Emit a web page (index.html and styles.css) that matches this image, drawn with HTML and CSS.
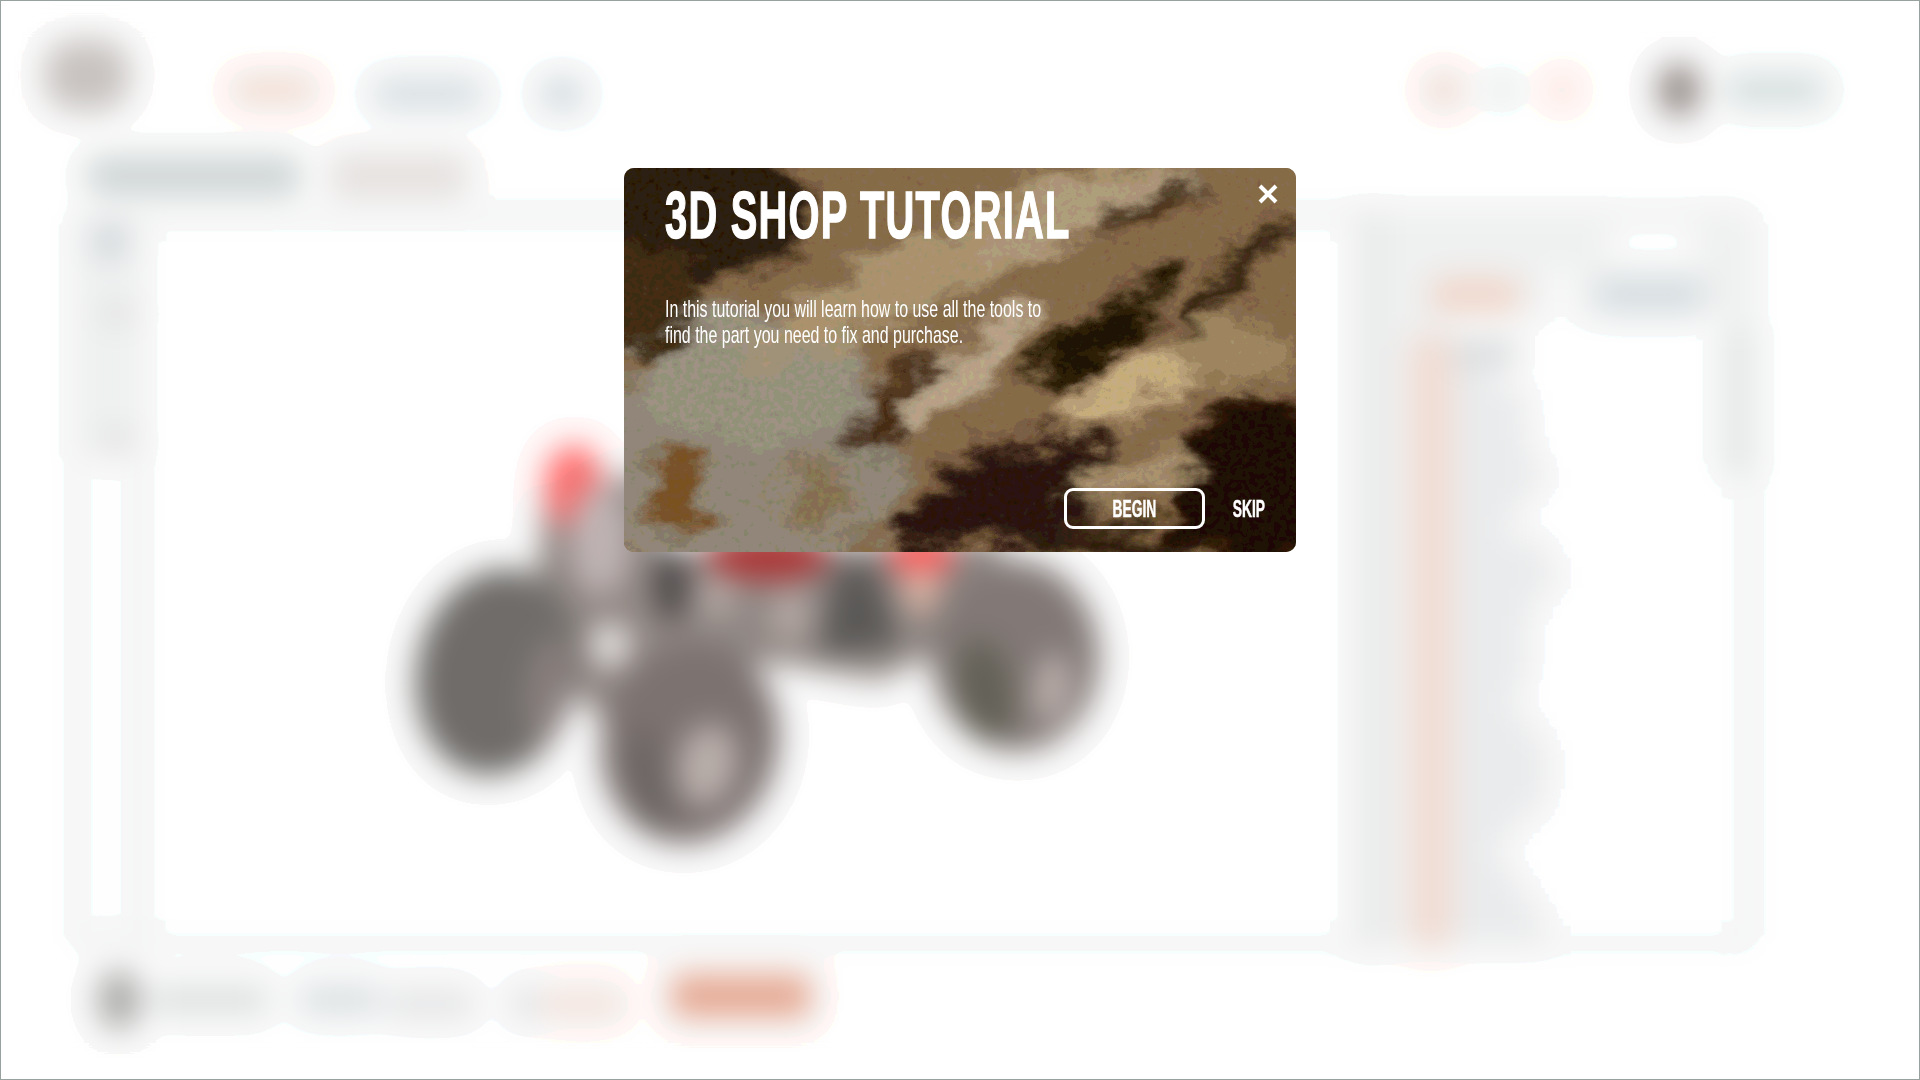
FILE: index.html
```html
<!DOCTYPE html>
<html lang="en">
<head>
    <meta charset="UTF-8">
    <meta name="viewport" content="width=device-width, initial-scale=1.0">
    <title>3D Shop Tutorial</title>
    <link rel="stylesheet" href="styles.css">
</head>
<body>

<!-- Filter used for the page behind the popup -->
<svg class="filters" width="0" height="0">
    <defs>
        <filter id="page-blur" x="0" y="0" width="100%" height="100%" color-interpolation-filters="sRGB">
            <feGaussianBlur stdDeviation="15" result="blur"/>
            <feComponentTransfer in="blur">
                <feFuncR type="gamma" exponent="138"/>
                <feFuncG type="gamma" exponent="138"/>
                <feFuncB type="gamma" exponent="138"/>
            </feComponentTransfer>
            <feComponentTransfer result="mask">
                <feFuncR type="discrete" tableValues="0 1"/>
                <feFuncG type="discrete" tableValues="0 1"/>
                <feFuncB type="discrete" tableValues="0 1"/>
            </feComponentTransfer>
            <feComposite in="blur" in2="mask" operator="arithmetic" k1="0.025" k2="0.975" k3="0" k4="0"/>
        </filter>
    </defs>
</svg>

<!-- Shop page, blurred behind the tutorial -->
<div class="app">
    <div class="top-bar">
        <div class="logo"></div>
        <div class="nav-item nav-peach"></div>
        <div class="nav-item nav-blue"></div>
        <div class="nav-item nav-small"></div>
        <div class="top-right">
            <div class="dot dot-peach"></div>
            <div class="dot dot-teal"></div>
            <div class="dot dot-orange"></div>
            <div class="avatar"></div>
            <div class="user-name"></div>
        </div>
    </div>

    <div class="title-row">
        <div class="page-title"></div>
        <div class="page-tag"></div>
    </div>

    <div class="workspace">
        <div class="sidebar">
            <div class="tool-icon"></div>
            <div class="tool-light"></div>
            <div class="tool-light tool-second"></div>
            <div class="tool-slot"></div>
        </div>

        <div class="viewport">
            <svg class="car" width="1212" height="717" viewBox="0 0 1212 717">
                <g transform="translate(-143 -220)">
                    <!-- body -->
                    <polygon points="545,500 650,470 660,552 1000,540 1000,620 880,680 790,665 700,660 610,730 530,640" fill="#958c88"/>
                    <ellipse cx="574" cy="487" rx="30" ry="42" fill="#ff7272"/>
                    <ellipse cx="600" cy="540" rx="30" ry="55" fill="#c4b8b8"/>
                    <ellipse cx="768" cy="555" rx="62" ry="26" fill="#b03c3c"/>
                    <ellipse cx="921" cy="554" rx="32" ry="26" fill="#ff6060"/>
                    <ellipse cx="921" cy="590" rx="18" ry="24" fill="#e0b8a8"/>
                    <ellipse cx="671" cy="585" rx="18" ry="38" fill="#504b4b"/>
                    <polygon points="835,565 875,565 900,645 820,655" fill="#5c5a58"/>
                    <ellipse cx="717" cy="595" rx="18" ry="22" fill="#b8aca8"/>
                    <ellipse cx="790" cy="615" rx="18" ry="26" fill="#bbaeaa"/>
                    <ellipse cx="610" cy="645" rx="20" ry="22" fill="#eeeaea"/>
                    <!-- wheels -->
                    <ellipse cx="497" cy="672" rx="80" ry="104" fill="#726f6c" transform="rotate(12 497 672)"/>
                    <ellipse cx="548" cy="690" rx="22" ry="55" fill="#8c8280" transform="rotate(8 548 690)"/>
                    <ellipse cx="690" cy="742" rx="88" ry="102" fill="#7f7573" transform="rotate(14 690 742)"/>
                    <ellipse cx="650" cy="780" rx="22" ry="50" fill="#6f6967" transform="rotate(-14 650 780)"/>
                    <ellipse cx="707" cy="765" rx="30" ry="42" fill="#bdb2ae" transform="rotate(14 707 765)"/>
                    <ellipse cx="1015" cy="655" rx="84" ry="96" fill="#857c79" transform="rotate(-6 1015 655)"/>
                    <ellipse cx="985" cy="690" rx="28" ry="52" fill="#666459" transform="rotate(-10 985 690)"/>
                    <ellipse cx="1052" cy="688" rx="18" ry="36" fill="#c0b4b0" transform="rotate(10 1052 688)"/>
                </g>
            </svg>
        </div>

        <div class="side">
            <div class="rail"></div>
            <div class="side-main">
                <div class="tabs">
                    <div class="tab tab-peach"></div>
                    <div class="tab-gap"></div>
                    <div class="tab tab-blue"></div>
                    <div class="tab-spot"></div>
                </div>
                <div class="side-body">
                    <div class="strip"></div>
                    <div class="list">
                        <div class="parts">
                            <div class="part part-head" style="width: 62px"></div>
                            <div class="part" style="width: 46px"></div>
                            <div class="part" style="width: 74px"></div>
                            <div class="part" style="width: 72px"></div>
                            <div class="part" style="width: 78px"></div>
                            <div class="part" style="width: 92px"></div>
                            <div class="part" style="width: 70px"></div>
                            <div class="part" style="width: 56px"></div>
                            <div class="part" style="width: 92px"></div>
                            <div class="part" style="width: 104px"></div>
                            <div class="part" style="width: 82px"></div>
                            <div class="part" style="width: 74px"></div>
                            <div class="part" style="width: 74px"></div>
                            <div class="part" style="width: 72px"></div>
                            <div class="part" style="width: 60px"></div>
                            <div class="part" style="width: 78px"></div>
                            <div class="part" style="width: 94px"></div>
                            <div class="part" style="width: 94px"></div>
                            <div class="part" style="width: 88px"></div>
                            <div class="part" style="width: 62px"></div>
                            <div class="part" style="width: 44px"></div>
                            <div class="part" style="width: 62px"></div>
                            <div class="part" style="width: 78px"></div>
                            <div class="part" style="width: 92px"></div>
                        </div>
                        <div class="scroll-thumb"></div>
                    </div>
                </div>
            </div>
        </div>
    </div>

    <div class="bottom-bar">
        <div class="bottom-icon"></div>
        <div class="bottom-pill pill-a"></div>
        <div class="bottom-pill pill-b"></div>
        <div class="bottom-pill pill-c"></div>
        <div class="bottom-dot"></div>
        <div class="bottom-pill pill-peach"></div>
        <div class="bottom-btn"></div>
    </div>
</div>

<!-- Tutorial popup -->
<div class="overlay">
    <div class="modal">
        <svg class="modal-bg" width="672" height="384" viewBox="0 0 672 384" preserveAspectRatio="none">
            <defs>
                <filter id="marble" x="-10%" y="-10%" width="120%" height="120%" color-interpolation-filters="sRGB">
                    <feTurbulence type="fractalNoise" baseFrequency="0.016 0.026" numOctaves="6" seed="11" result="noise"/>
                    <feDisplacementMap in="SourceGraphic" in2="noise" scale="70" xChannelSelector="R" yChannelSelector="G" result="shape"/>
                    <feTurbulence type="fractalNoise" baseFrequency="0.16" numOctaves="2" seed="4"/>
                    <feColorMatrix type="matrix" values="0.6 0.4 0 0 0  0.6 0.4 0 0 0  0.6 0.4 0 0 0  0 0 0 0 1" result="grain"/>
                    <feComposite in="shape" in2="grain" operator="arithmetic" k1="0" k2="1" k3="0.08" k4="-0.04"/>
                    <feComponentTransfer>
                        <feFuncR type="discrete" tableValues="0.025 0.075 0.125 0.175 0.225 0.275 0.325 0.375 0.425 0.475 0.525 0.575 0.625 0.675 0.725 0.775 0.825 0.875 0.925 0.975"/>
                        <feFuncG type="discrete" tableValues="0.025 0.075 0.125 0.175 0.225 0.275 0.325 0.375 0.425 0.475 0.525 0.575 0.625 0.675 0.725 0.775 0.825 0.875 0.925 0.975"/>
                        <feFuncB type="discrete" tableValues="0.025 0.075 0.125 0.175 0.225 0.275 0.325 0.375 0.425 0.475 0.525 0.575 0.625 0.675 0.725 0.775 0.825 0.875 0.925 0.975"/>
                    </feComponentTransfer>
                </filter>
                <filter id="soft"><feGaussianBlur stdDeviation="8"/></filter>
            </defs>
            <rect width="672" height="384" fill="#7f6545"/>
            <g filter="url(#marble)">
                <rect x="-60" y="-60" width="800" height="510" fill="#85694a"/>
                <g filter="url(#soft)">
                    <ellipse cx="110" cy="300" rx="170" ry="120" fill="#8f8575"/>
                    <ellipse cx="130" cy="210" rx="110" ry="70" fill="#98907f"/>
                    <ellipse cx="55" cy="325" rx="34" ry="40" fill="#7a5428"/>
                    <ellipse cx="190" cy="330" rx="40" ry="36" fill="#8a7255"/>
                    <ellipse cx="60" cy="40" rx="125" ry="72" fill="#2a1c0a"/>
                    <ellipse cx="15" cy="125" rx="60" ry="60" fill="#3f2d12"/>
                    <ellipse cx="330" cy="90" rx="230" ry="34" fill="#a8946f" transform="rotate(-24 330 90)"/>
                    <ellipse cx="470" cy="40" rx="110" ry="24" fill="#ae9a7a" transform="rotate(-18 470 40)"/>
                    <ellipse cx="530" cy="36" rx="52" ry="11" fill="#3c280e" transform="rotate(-30 530 36)"/>
                    <ellipse cx="610" cy="108" rx="80" ry="12" fill="#33200a" transform="rotate(-48 610 108)"/>
                    <ellipse cx="478" cy="165" rx="85" ry="22" fill="#241304" transform="rotate(-38 478 165)"/>
                    <ellipse cx="275" cy="235" rx="68" ry="22" fill="#4a2d12" transform="rotate(-52 275 235)"/>
                    <ellipse cx="345" cy="200" rx="80" ry="26" fill="#b6a488" transform="rotate(-42 345 200)"/>
                    <ellipse cx="505" cy="225" rx="70" ry="28" fill="#c2a97f" transform="rotate(-20 505 225)"/>
                    <ellipse cx="610" cy="185" rx="60" ry="30" fill="#a08962"/>
                    <ellipse cx="385" cy="330" rx="115" ry="52" fill="#2b1908" transform="rotate(-18 385 330)"/>
                    <ellipse cx="630" cy="320" rx="85" ry="90" fill="#240f02"/>
                    <ellipse cx="510" cy="310" rx="62" ry="20" fill="#a68e6a" transform="rotate(-12 510 310)"/>
                    <ellipse cx="500" cy="375" rx="80" ry="20" fill="#33200a"/>
                </g>
            </g>
        </svg>

        <button class="close-btn" aria-label="Close">
            <svg width="22" height="20" viewBox="0 0 22 20">
                <path d="M3 2 L19 18 M19 2 L3 18" stroke="#fff" stroke-width="4" fill="none"/>
            </svg>
        </button>

        <h1 class="modal-title"><span>3D SHOP TUTORIAL</span></h1>
        <p class="modal-text"><span>In this tutorial you will learn how to use all the tools to<br>find the part you need to fix and purchase.</span></p>

        <div class="modal-actions">
            <button class="begin-btn"><span>BEGIN</span></button>
            <button class="skip-btn"><span>SKIP</span></button>
        </div>
    </div>
</div>

</body>
</html>
```
FILE: styles.css
```css
/* General Body Styling */
html, body {
    height: 100%;
}

body {
    margin: 0;
    box-sizing: border-box;
    border: 1px solid #98a0a0;
    background: #fff;
    overflow: hidden;
    font-family: 'Liberation Sans', Arial, sans-serif;
    color: #fff;
}

.filters {
    position: absolute;
}

/* Blurred page behind the popup */
.app {
    height: 100%;
    background: #fff;
    filter: url(#page-blur);
}

.top-bar {
    display: flex;
    align-items: center;
    box-sizing: border-box;
    height: 144px;
    padding-top: 34px;
}

.logo {
    width: 84px;
    height: 70px;
    margin-left: 44px;
    margin-bottom: 30px;
    border-radius: 30px;
    background: #cdc8c5;
}

.nav-item {
    height: 30px;
    border-radius: 15px;
}

.nav-peach {
    width: 86px;
    margin-left: 102px;
    background: #f9e4da;
}

.nav-blue {
    width: 110px;
    margin-left: 56px;
    margin-top: 8px;
    background: #dde5e8;
}

.nav-small {
    width: 42px;
    margin-left: 58px;
    margin-top: 8px;
    background: #d6dfe3;
}

.top-right {
    display: flex;
    align-items: center;
    margin-left: auto;
    margin-right: 94px;
}

.dot {
    border-radius: 50%;
}

.dot-peach {
    width: 40px;
    height: 38px;
    background: #f8e4dc;
}

.dot-teal {
    width: 24px;
    height: 20px;
    margin-left: 26px;
    background: #e4eded;
}

.dot-orange {
    width: 28px;
    height: 28px;
    margin-left: 34px;
    background: #fbe6da;
}

.avatar {
    width: 44px;
    height: 54px;
    margin-left: 81px;
    border-radius: 50%;
    background: #9d9491;
}

.user-name {
    width: 100px;
    height: 28px;
    margin-left: 24px;
    border-radius: 14px;
    background: #d8e2e2;
}

.title-row {
    display: flex;
    align-items: center;
    box-sizing: border-box;
    height: 65px;
    padding: 0 0 4px 86px;
    position: relative;
    z-index: 1;
}

.page-title {
    width: 214px;
    height: 36px;
    border-radius: 18px;
    background: #d2d9d9;
}

.page-tag {
    width: 136px;
    height: 42px;
    margin-left: 30px;
    border-radius: 12px;
    background: #ebe7e5;
}

/* Workspace frame */
.workspace {
    display: grid;
    grid-template-columns: 70px 1212px 399px;
    width: 1681px;
    height: 737px;
    margin-left: 72px;
    border-radius: 14px;
    background: #f5f6f6;
}

.sidebar {
    display: flex;
    flex-direction: column;
    padding-top: 12px;
}

.tool-icon {
    width: 32px;
    height: 38px;
    margin-left: 21px;
    border-radius: 16px;
    background: #d6dcdf;
}

.tool-light {
    width: 32px;
    height: 24px;
    margin-top: 42px;
    margin-left: 28px;
    border-radius: 12px;
    background: #e6e6e6;
}

.tool-second {
    margin-top: 102px;
}

.tool-slot {
    width: 50px;
    height: 482px;
    margin-top: 3px;
    margin-left: 9px;
    border-radius: 10px;
    background: #fff;
}

.viewport {
    display: flex;
    justify-content: center;
    margin: 10px 0;
    border-radius: 14px;
    background: #fff;
}

.side {
    display: flex;
}

.rail {
    width: 28px;
    margin: 0 3px 0 3px;
    border-radius: 14px;
    background: #eff0f0;
}

.side-main {
    flex: 1;
    display: flex;
    flex-direction: column;
}

.tabs {
    display: flex;
    align-items: center;
    flex-shrink: 0;
    box-sizing: border-box;
    height: 107px;
    padding: 62px 0 0 40px;
    position: relative;
}

.tab {
    height: 34px;
    border-radius: 17px;
}

.tab-peach {
    width: 92px;
    background: #f6dccf;
}

.tab-gap {
    width: 74px;
    height: 50px;
    background: linear-gradient(to right, transparent 35%, #fff 35%, #fff 75%, transparent 75%);
}

.tab-blue {
    width: 110px;
    background: #dce4e7;
}

.tab-spot {
    position: absolute;
    top: 12px;
    left: 216px;
    width: 96px;
    height: 46px;
    border-radius: 20px;
    background: #fff;
}

.side-body {
    flex: 1;
    display: flex;
    min-height: 0;
}

.strip {
    width: 44px;
    margin: 15px 0 0 20px;
    border-radius: 22px 22px 18px 18px;
    background: #f7e3da;
}

.list {
    flex: 1;
    position: relative;
    margin: 0 10px 10px 0;
    padding-top: 23px;
    border-radius: 0 0 12px 12px;
    background: #fff;
}

.part {
    height: 25px;
    background: #f0f1f2;
}

.part-head {
    background: #dfe1e2;
}

.scroll-thumb {
    position: absolute;
    top: 5px;
    right: -10px;
    width: 31px;
    height: 156px;
    border-radius: 15px;
    background: #ebeeee;
}

/* Bottom action bar */
.bottom-bar {
    display: flex;
    align-items: center;
    height: 106px;
    padding-left: 96px;
}

.bottom-icon {
    width: 44px;
    height: 60px;
    border-radius: 50%;
    background: #b2b2b0;
}

.bottom-pill {
    height: 26px;
    border-radius: 13px;
}

.pill-a {
    width: 118px;
    margin-left: 10px;
    background: #e2e5e5;
}

.pill-b {
    width: 82px;
    margin-left: 30px;
    background: #dfe5e7;
}

.pill-c {
    width: 90px;
    margin-left: 4px;
    margin-top: 8px;
    background: #e9eaeb;
}

.bottom-dot {
    width: 30px;
    height: 30px;
    margin-left: 36px;
    margin-top: 8px;
    border-radius: 50%;
    background: #e6e8ea;
}

.pill-peach {
    width: 84px;
    height: 30px;
    margin-top: 8px;
    background: #f9e9e2;
}

.bottom-btn {
    width: 140px;
    height: 44px;
    margin-left: 46px;
    margin-top: -8px;
    border-radius: 12px;
    background: #ecb09a;
}

/* Tutorial popup */
.overlay {
    position: fixed;
    top: 0;
    left: 0;
    right: 0;
    bottom: 0;
    display: flex;
    justify-content: center;
    align-items: flex-start;
    padding-top: 168px;
}

.modal {
    position: relative;
    display: flex;
    flex-direction: column;
    box-sizing: border-box;
    width: 672px;
    height: 384px;
    padding: 13px 26px 23px 41px;
    border-radius: 10px;
    overflow: hidden;
}

.modal-bg {
    position: absolute;
    top: 0;
    left: 0;
}

.modal-title,
.modal-text,
.modal-actions {
    position: relative;
}

.modal-title {
    margin: 0;
    font-size: 66px;
    line-height: 68px;
    font-weight: 700;
    letter-spacing: 2px;
    white-space: nowrap;
    -webkit-text-stroke: 1.5px #fff;
}

.modal-title span {
    display: inline-block;
    transform: scaleX(0.604);
    transform-origin: left center;
}

.modal-text {
    margin: 47px 0 0;
    font-size: 24px;
    line-height: 26px;
    white-space: nowrap;
}

.modal-text span {
    display: inline-block;
    transform: scaleX(0.665);
    transform-origin: left center;
}

.modal-actions {
    display: flex;
    align-items: center;
    justify-content: flex-end;
    margin-top: auto;
}

button {
    font-family: inherit;
    color: #fff;
    background: none;
    border: none;
    padding: 0;
    cursor: pointer;
}

.begin-btn,
.skip-btn {
    font-size: 23px;
    font-weight: 700;
    line-height: 26px;
    -webkit-text-stroke: 0.5px #fff;
}

.begin-btn span,
.skip-btn span {
    display: inline-block;
    transform: scaleX(0.6);
}

.begin-btn {
    box-sizing: border-box;
    width: 141px;
    height: 41px;
    border: 3px solid #fff;
    border-radius: 9px;
}

.skip-btn {
    width: 31px;
    margin-left: 28px;
    margin-right: 6px;
    display: flex;
    justify-content: center;
}

.close-btn {
    position: absolute;
    top: 16px;
    right: 17px;
    display: flex;
}
```
